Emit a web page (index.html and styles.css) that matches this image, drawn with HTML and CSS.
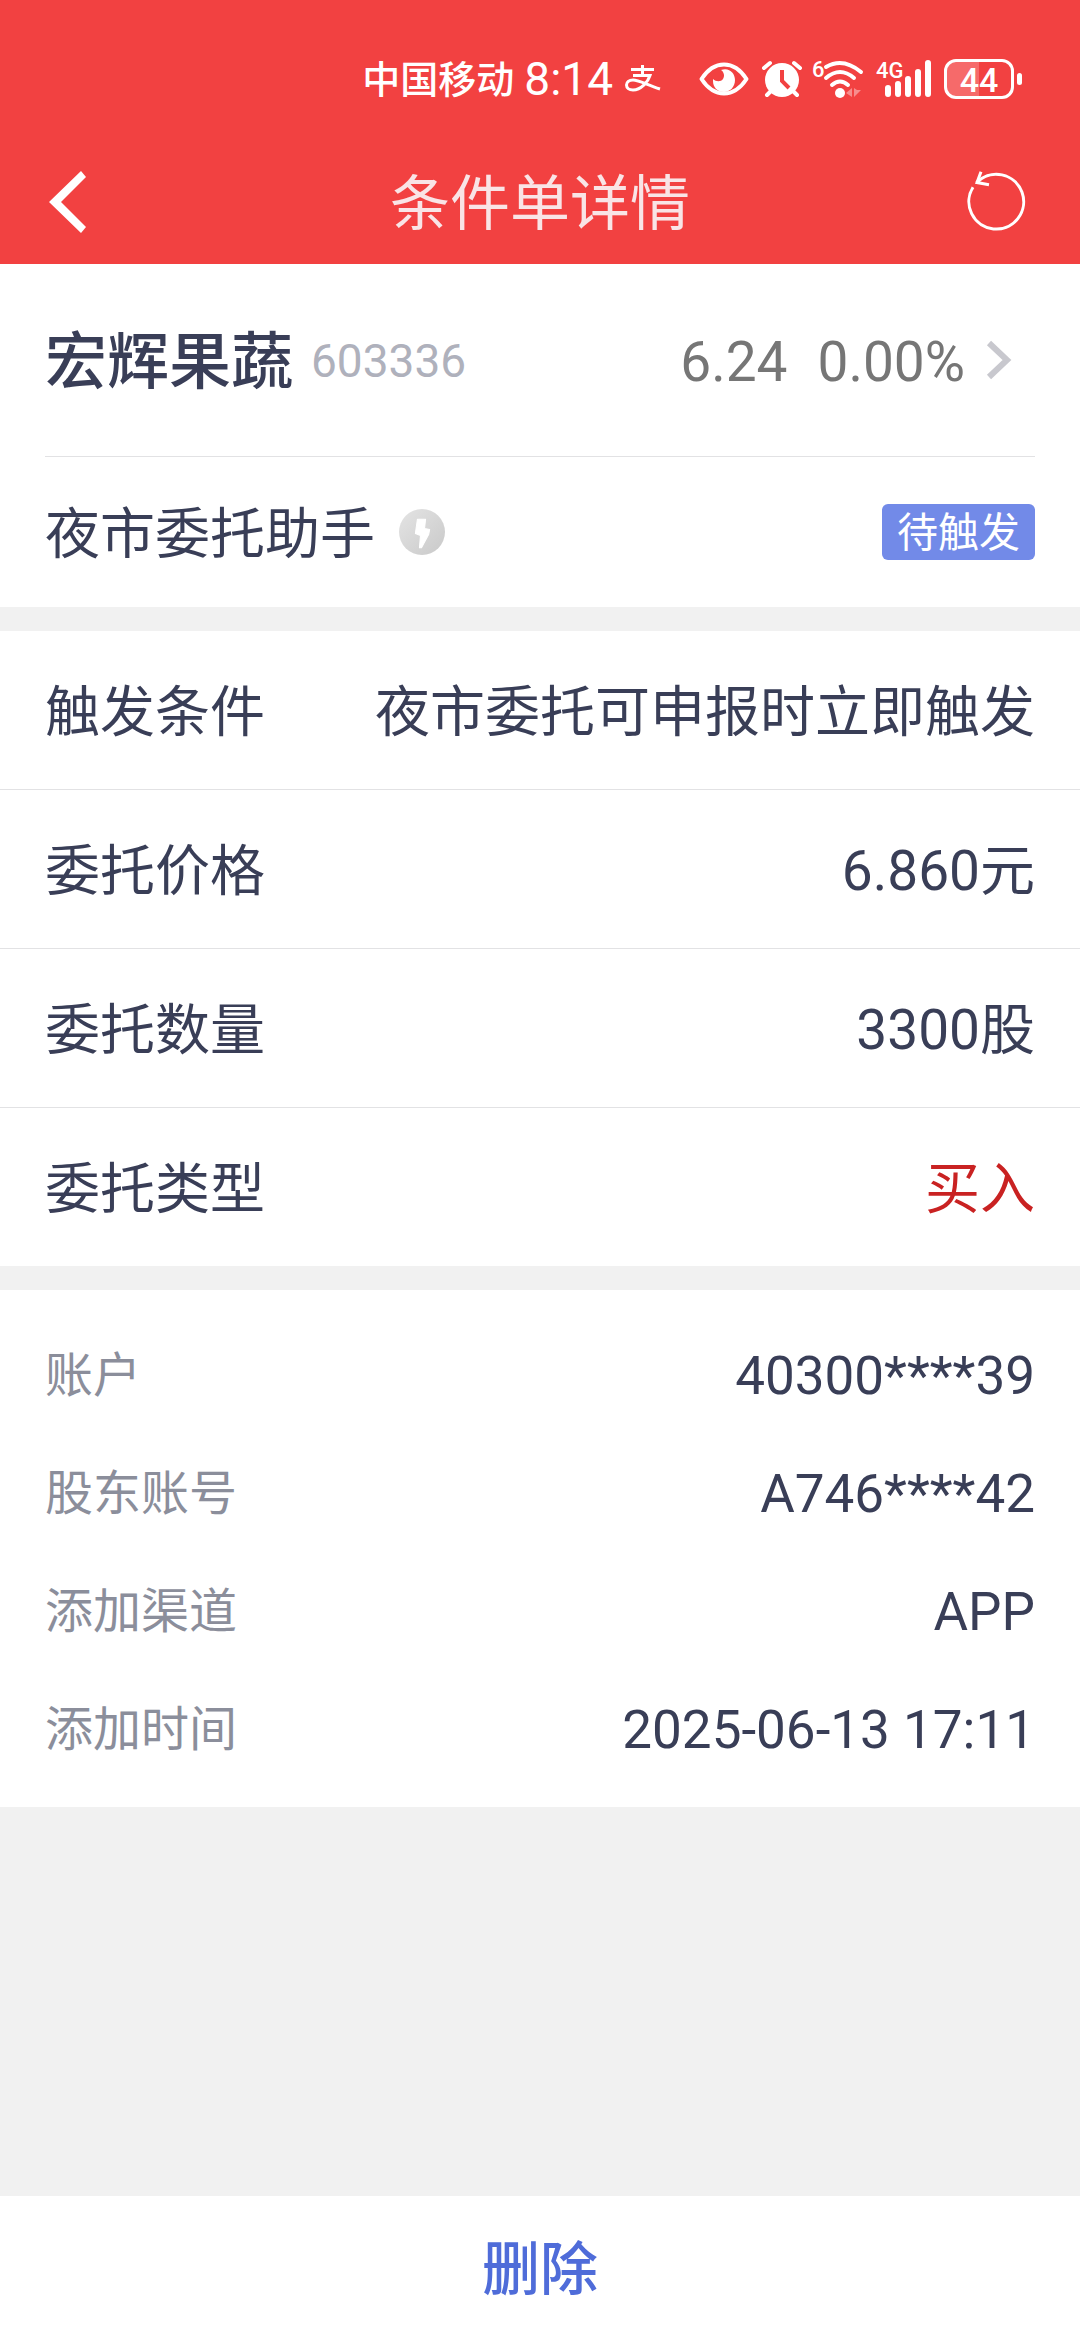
FILE: index.html
```html
<!DOCTYPE html>
<html lang="zh-CN">
<head>
<meta charset="utf-8">
<meta name="viewport" content="width=device-width, initial-scale=1">
<title>条件单详情</title>
<link rel="stylesheet" href="styles.css">
</head>
<body>
<header class="top">
  <div class="status">
    <span class="carrier">中国移动</span>
    <span class="clock">8:14</span>
    <svg class="pay" width="36" height="28" viewBox="0 0 36 28" fill="none" stroke="#fff" stroke-width="3" aria-hidden="true">
      <path d="M6 4.500H29M17.500 0V10M8 10.500H25C23 17 16 25 8 25C4 25 1.500 23 1.500 20C1.500 17 4 15 8 15C14 15 22 20 35 24"/>
    </svg>
    <svg class="eye" width="50" height="34" viewBox="0 0 50 34" aria-hidden="true">
      <path d="M2.500 17Q12 2.500 25 2.500T47.500 17Q38 31.500 25 31.500T2.500 17Z" fill="none" stroke="#fff" stroke-width="4" stroke-linejoin="round"/>
      <path d="M22 8C30 5 36 11 36 18C36 25 31 30 25 30C18 30 14 25 14 19L14 17C17 20 22 20 24 17C26 14 25 10 22 8Z" fill="#fff"/>
    </svg>
    <svg width="40" height="38" viewBox="0 0 40 38" aria-hidden="true">
      <circle cx="20" cy="20" r="17" fill="#fff"/>
      <path d="M2 8L8 3M38 8L32 3M9 31L5 35M31 31L35 35" stroke="#fff" stroke-width="4" stroke-linecap="round"/>
      <path d="M20 10V21L27 28" fill="none" stroke="#f24141" stroke-width="4"/>
    </svg>
    <svg class="wifi" width="52" height="40" viewBox="0 0 52 40" aria-hidden="true">
      <text x="0" y="18" class="net">6</text>
      <g fill="none" stroke="#fff" stroke-width="4" stroke-linecap="round">
        <path d="M14 8Q31 -2 49 13M14 19Q28 7 42 19M20 26Q28 19 36 26"/>
      </g>
      <circle cx="28" cy="34" r="5" fill="#fff"/>
      <path d="M34 34L40 29V38ZM42 29V38L49 31H45Z" fill="#fff" opacity=".4"/>
    </svg>
    <svg class="signal" width="56" height="40" viewBox="0 0 56 40" aria-hidden="true">
      <text x="0" y="19" class="net">4G</text>
      <path d="M12 29V35M22 25V35M32 20V35M42 13V35M52 4V35" stroke="#fff" stroke-width="6" stroke-linecap="round"/>
    </svg>
    <span class="battery"><span class="level">44</span></span>
  </div>
  <nav class="bar">
    <button class="icon-button" type="button" aria-label="返回">
      <svg width="38" height="62" viewBox="0 0 38 62"><path d="M32 0L37 6L12 31L37 56L32 62L0 31Z" fill="#fff"/></svg>
    </button>
    <h1 class="title">条件单详情</h1>
    <button class="icon-button end" type="button" aria-label="刷新">
      <svg width="65" height="64" viewBox="0 0 65 64" fill="none" stroke="#fff" stroke-width="3">
        <path d="M10.600 12.600A27.400 27.400 0 1 1 7 17.200"/><path d="M15 1.700L11 12.500L23 14.700"/>
      </svg>
    </button>
  </nav>
</header>

<main class="content">
  <section class="panel summary">
    <a class="stock" href="#stock">
      <span class="name">宏辉果蔬</span>
      <span class="code">603336</span>
      <span class="price">6.24</span>
      <span class="change">0.00%</span>
      <svg width="24" height="40" viewBox="0 0 24 40" fill="none" stroke="#c8c8ce" stroke-width="6"><path d="M2 3L20 20L2 37"/></svg>
    </a>
    <div class="strategy">
      <span class="label">夜市委托助手</span>
      <svg width="46" height="46" viewBox="0 0 45 45" aria-hidden="true">
        <defs><linearGradient id="disc" x1="0" y1="0" x2="1" y2="1"><stop offset="0" stop-color="#e4e4e4"/><stop offset="1" stop-color="#c9c9c9"/></linearGradient></defs>
        <circle cx="22.500" cy="22.500" r="22.500" fill="url(#disc)"/>
        <path d="M18 10H26L25 19L30 20L29 25L22 38H20L21 26L16 24Z" fill="#fff" stroke="#fff" stroke-linejoin="round"/>
      </svg>
      <span class="badge">待触发</span>
    </div>
  </section>

  <dl class="panel terms">
    <div class="term"><dt>触发条件</dt><dd>夜市委托可申报时立即触发</dd></div>
    <div class="term"><dt>委托价格</dt><dd>6.860元</dd></div>
    <div class="term"><dt>委托数量</dt><dd>3300股</dd></div>
    <div class="term"><dt>委托类型</dt><dd class="buy">买入</dd></div>
  </dl>

  <dl class="panel account">
    <div class="entry"><dt>账户</dt><dd>40300****39</dd></div>
    <div class="entry"><dt>股东账号</dt><dd>A746****42</dd></div>
    <div class="entry"><dt>添加渠道</dt><dd>APP</dd></div>
    <div class="entry"><dt>添加时间</dt><dd>2025-06-13 17:11</dd></div>
  </dl>
</main>

<footer class="actions">
  <button class="delete" type="button">删除</button>
</footer>
</body>
</html>
```

FILE: styles.css
```css
* {
  box-sizing: border-box;
}

body {
  display: flex;
  flex-direction: column;
  min-height: 100vh;
  margin: 0;
  background: #f1f1f1;
  color: #393e57;
  font-family: Roboto, "Noto Sans CJK SC", sans-serif;
  font-size: 55px;
  line-height: 64px;
}

button {
  padding: 0;
  border: 0;
  background: none;
  font: inherit;
}

svg {
  display: block;
  flex: none;
  overflow: visible;
}

dl,
dd {
  margin: 0;
}

.top {
  background: #f24141;
  color: #fff;
}

.status {
  display: flex;
  align-items: center;
  justify-content: flex-end;
  height: 140px;
  padding: 18px 58px 0 0;
}

.carrier {
  padding-top: 2px;
  font-size: 38px;
  font-weight: 500;
}

.clock {
  margin: 0 12px 0 10px;
  font-size: 46px;
}

.eye {
  margin: 0 13px 0 38px;
}

.wifi {
  margin: 0 12px 0 10px;
}

.signal {
  margin-right: 12px;
}

.net {
  fill: #fff;
  font-size: 22px;
  font-weight: 500;
}

.battery {
  display: flex;
  align-items: center;
  gap: 3px;
}

.battery::after {
  width: 5px;
  height: 12px;
  border-radius: 3px;
  background: #fff;
  content: "";
}

.level {
  width: 70px;
  height: 40px;
  border: 3px solid #fff;
  border-radius: 12px;
  background: linear-gradient(90deg, #f66a6a 50%, transparent 50%);
  font-size: 34px;
  font-weight: 500;
  line-height: 36px;
  text-align: center;
}

.bar {
  display: grid;
  grid-template-columns: 1fr auto 1fr;
  align-items: center;
  height: 124px;
  padding: 0 49px;
}

.icon-button {
  justify-self: start;
}

.icon-button.end {
  justify-self: end;
}

.title {
  margin: 0;
  padding-top: 6px;
  color: #f9e4e6;
  font-size: 60px;
  font-weight: 400;
}

.content {
  display: grid;
  gap: 24px;
}

.panel {
  background: #fff;
}

.summary {
  padding: 0 45px;
}

.stock {
  display: flex;
  align-items: center;
  height: 193px;
  border-bottom: 1px solid #e2e2e4;
  color: #767676;
  font-size: 55px;
  text-decoration: none;
}

.name {
  padding-top: 6px;
  color: #393e57;
  font-size: 62px;
  font-weight: 500;
}

.code {
  margin: 0 auto 0 18px;
  padding-top: 2px;
  color: #afb1bc;
  font-size: 46px;
}

.price,
.change {
  padding-top: 4px;
}

.change {
  margin: 0 22px 0 30px;
}

.stock svg {
  margin-right: 24px;
}

.strategy {
  display: flex;
  align-items: center;
  gap: 24px;
  height: 150px;
}

.label {
  padding-top: 4px;
}

.badge {
  height: 56px;
  margin-left: auto;
  padding: 0 15px;
  border-radius: 6px;
  background: #728ae8;
  color: #fff;
  font-size: 41px;
  line-height: 58px;
}

.term,
.entry {
  display: flex;
  align-items: center;
  justify-content: space-between;
  padding: 4px 45px 0;
}

.term {
  height: 159px;
  border-bottom: 1px solid #e2e2e4;
}

.term:last-child {
  height: 158px;
  border-bottom: 0;
}

.buy {
  color: #c92222;
}

.account {
  padding: 25px 0 20px;
}

.entry {
  height: 118px;
}

.entry dt {
  color: #8b8e9b;
  font-size: 48px;
}

.entry dd {
  font-size: 53px;
}

.actions {
  margin-top: auto;
  background: #fff;
}

.delete {
  display: block;
  width: 100%;
  height: 144px;
  padding-top: 4px;
  color: #4f6cd9;
  font-size: 58px;
  font-weight: 500;
}
```
